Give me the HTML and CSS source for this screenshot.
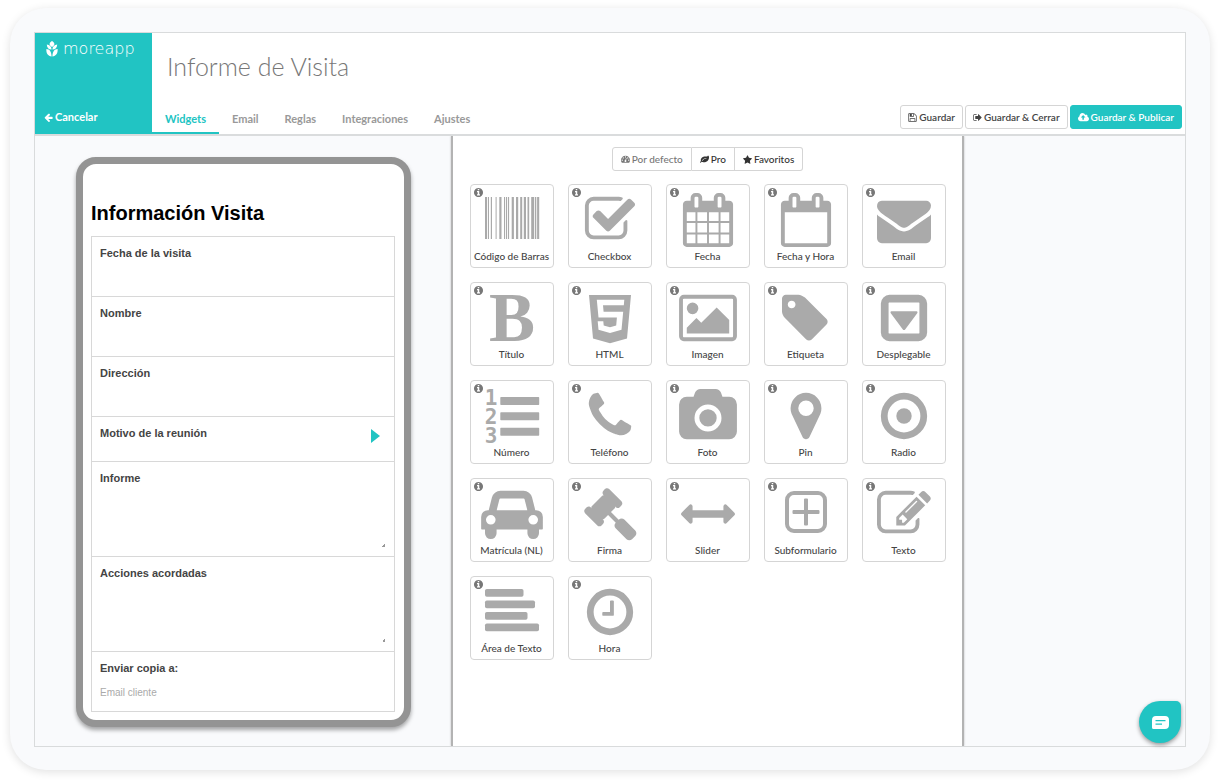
FILE: index.html
```html
<!DOCTYPE html>
<html lang="es">
<head>
<meta charset="utf-8">
<title>Informe de Visita</title>
<link rel="stylesheet" href="styles.css">
</head>
<body>
<svg class="sprite" aria-hidden="true">
  <symbol id="info" viewBox="128 128 1536 1536"><path d="M1152 1376v-160q0-14-9-23t-23-9h-96v-512q0-14-9-23t-23-9h-320q-14 0-23 9t-9 23v160q0 14 9 23t23 9h96v320h-96q-14 0-23 9t-9 23v160q0 14 9 23t23 9h448q14 0 23-9t9-23zm-128-896v-160q0-14-9-23t-23-9h-192q-14 0-23 9t-9 23v160q0 14 9 23t23 9h192q14 0 23-9t9-23zm640 416q0 209-103 385.5t-279.5 279.5-385.5 103-385.5-103-279.5-279.5-103-385.5 103-385.5 279.5-279.5 385.5-103 385.5 103 279.5 279.5 103 385.5z"/></symbol>
</svg>
<main class="frame">
  <div class="app">
    <header class="header">
      <div class="brand">
        <div class="logo">
          <svg class="logo-mark" viewBox="0 0 12 16" aria-hidden="true"><path d="M6 0c1.600.9 2.400 1.900 2.400 3S7.600 5 6 5.900C4.400 5 3.600 4.100 3.600 3S4.400.9 6 0zM.8 3.500C3.700 4 5.400 5.600 5.600 8.600 2.600 8.400.8 6.600.8 3.500zM11.200 3.500C8.300 4 6.600 5.600 6.400 8.600c3-.2 4.800-2 4.800-5.100zM.4 8c3.300.3 5 2.200 5.200 7.600C2 15 0 12.500.4 8zM11.600 8c-3.300.3-5 2.200-5.200 7.600C10 15 12 12.500 11.600 8z"/></svg>
          <span class="logo-text">moreapp</span>
        </div>
        <a class="cancel" href="#"><svg class="ico" viewBox="64 128 1664 1536" aria-hidden="true"><path d="M1664 896v128q0 53-32.500 90.500t-84.500 37.500h-704l293 294q38 36 38 90t-38 90l-75 76q-37 37-90 37-52 0-91-37l-651-652q-37-37-37-90 0-52 37-91l651-650q38-38 91-38 52 0 90 38l75 74q38 38 38 91t-38 91l-293 293h704q52 0 84.500 37.500t32.500 90.500z"/></svg>Cancelar</a>
      </div>
      <div class="head-main">
        <h1 class="title">Informe de Visita</h1>
        <div class="bar">
          <nav class="tabs">
            <a class="tab active" href="#">Widgets</a>
            <a class="tab" href="#">Email</a>
            <a class="tab" href="#">Reglas</a>
            <a class="tab" href="#">Integraciones</a>
            <a class="tab" href="#">Ajustes</a>
          </nav>
          <div class="actions">
            <button class="btn" type="button"><svg class="ico" viewBox="64 64 1664 1664" aria-hidden="true"><path d="M512 1536h768v-384h-768v384zm896 0h128v-896q0-14-10-38.500t-20-34.500l-281-281q-10-10-34-20t-39-10v416q0 40-28 68t-68 28h-576q-40 0-68-28t-28-68v-416h-128v1280h128v-416q0-40 28-68t68-28h832q40 0 68 28t28 68v416zm-384-928v-320q0-13-9.500-22.500t-22.500-9.500h-192q-13 0-22.500 9.500t-9.500 22.500v320q0 13 9.500 22.500t22.500 9.500h192q13 0 22.500-9.500t9.500-22.500zm640 32v928q0 40-28 68t-68 28h-1344q-40 0-68-28t-28-68v-1344q0-40 28-68t68-28h928q40 0 88 20t76 48l280 280q28 28 48 76t20 88z"/></svg>Guardar</button>
            <button class="btn" type="button"><svg class="ico" viewBox="32 64 1664 1664" aria-hidden="true"><path d="M704 1440q0 4 1 20t.5 26.500-3 23.500-10 19.500-20.500 6.500h-320q-119 0-203.500-84.500t-84.500-203.500v-704q0-119 84.500-203.500t203.500-84.500h320q13 0 22.500 9.500t9.500 22.500q0 4 1 20t.5 26.500-3 23.500-10 19.500-20.500 6.500h-320q-66 0-113 47t-47 113v704q0 66 47 113t113 47h312l11.500 1 11.500 3 8 5.500 7 9 2 13.500zm928-544q0 26-19 45l-544 544q-19 19-45 19t-45-19-19-45v-288h-448q-26 0-45-19t-19-45v-384q0-26 19-45t45-19h448v-288q0-26 19-45t45-19 45 19l544 544q19 19 19 45z"/></svg>Guardar &amp; Cerrar</button>
            <button class="btn primary" type="button"><svg class="ico wide" viewBox="-64 128 1920 1536" aria-hidden="true"><path d="M1216 864q0-14-9-23l-352-352q-9-9-23-9t-23 9l-351 351q-10 12-10 24 0 14 9 23t23 9h224v352q0 13 9.500 22.500t22.500 9.500h192q13 0 22.500-9.500t9.500-22.500v-352h224q13 0 22.500-9.500t9.500-22.500zm640 288q0 159-112.500 271.500t-271.500 112.500h-1088q-185 0-316.500-131.500t-131.500-316.500q0-130 70-240t188-165q-2-30-2-43 0-212 150-362t362-150q156 0 285.500 87t188.500 231q71-62 166-62 106 0 181 75t75 181q0 76-41 138 130 31 213.500 135.500t83.500 238.500z"/></svg>Guardar &amp; Publicar</button>
          </div>
        </div>
      </div>
    </header>
    <div class="work">
      <section class="preview">
        <form class="phone">
          <h2 class="form-title">Información Visita</h2>
          <div class="fields">
            <div class="field"><label for="f1">Fecha de la visita</label><input id="f1" type="text"></div>
            <div class="field"><label for="f2">Nombre</label><input id="f2" type="text"></div>
            <div class="field"><label for="f3">Dirección</label><input id="f3" type="text"></div>
            <div class="field link"><span>Motivo de la reunión</span><button class="next" type="button" aria-label="Abrir"><svg viewBox="0 0 9 14"><path d="M0 0 9 7 0 14z"/></svg></button></div>
            <div class="field"><label for="f5">Informe</label><textarea id="f5"></textarea></div>
            <div class="field"><label for="f6">Acciones acordadas</label><textarea id="f6"></textarea></div>
            <div class="field"><label for="f7">Enviar copia a:</label><input id="f7" type="email" placeholder="Email cliente"></div>
          </div>
        </form>
      </section>
      <section class="palette">
        <div class="filters">
          <button class="filter muted" type="button"><svg class="ico" viewBox="0 128 1792 1536" aria-hidden="true"><path fill-rule="evenodd" d="M896 128a896 896 0 0 1 896 896q0 261-141 483-19 29-54 29H195q-35 0-54-29Q0 1285 0 1024A896 896 0 0 1 896 128zM384 1024a128 128 0 1 0-256 0 128 128 0 1 0 256 0zM576 576a128 128 0 1 0-256 0 128 128 0 1 0 256 0zM1024 384a128 128 0 1 0-256 0 128 128 0 1 0 256 0zM1472 576a128 128 0 1 0-256 0 128 128 0 1 0 256 0zM1664 1024a128 128 0 1 0-256 0 128 128 0 1 0 256 0zM1004 1041l101-382q6-26-7.500-48.500T1059 581t-48 6.500T981 626L880 1008a192 192 0 1 0 124 33z"/></svg>Por defecto</button>
          <button class="filter" type="button"><svg class="ico" viewBox="0 128 1792 1536" aria-hidden="true"><path d="M1280 704q0-26-19-45t-45-19q-172 0-318 49.500t-259.500 134-235.500 219.500q-19 21-19 45 0 26 19 45t45 19q24 0 45-19 27-24 74-71t67-66q137-124 268.500-176t313.500-52q26 0 45-19t19-45zm512-198q0 95-20 193-46 224-184.500 383t-357.500 268q-214 108-438 108-148 0-286-47-15-5-88-42t-96-37q-16 0-39.500 32t-45 70-52.500 70-60 32q-43 0-63.500-17.500t-45.500-59.500q-2-4-6-11t-5.500-10-3-9.500-1.500-13.500q0-35 31-73.500t68-65.500 68-56 31-48q0-4-14-38t-16-44q-9-51-9-104 0-115 43.500-220t119-184.500 170.500-139 204-95.500q55-18 145-25.500t179.500-9 178.500-6 163.500-24 113.500-56.500l29.500-29.500 29.500-28 27-20 36.500-16 43.500-4.500q39 0 70.500 46t47.500 112 24 124 8 96z"/></svg>Pro</button>
          <button class="filter" type="button"><svg class="ico" viewBox="64 32 1664 1600" aria-hidden="true"><path d="M1728 647q0 22-26 48l-363 354 86 500q1 7 1 20 0 21-10.500 35.500t-30.500 14.500q-19 0-40-12l-449-236-449 236q-22 12-40 12-21 0-31.500-14.500t-10.500-35.500q0-6 2-20l86-500-364-354q-25-27-25-48 0-37 56-46l502-73 225-455q19-41 49-41t49 41l225 455 502 73q56 9 56 46z"/></svg>Favoritos</button>
        </div>
        <div class="grid">
          <div class="tile"><svg class="info"><use href="#info"/></svg><svg class="pic" viewBox="0 0 62 54"><path d="M4 4h2v42H4zM6.900 4H8v42H6.900zM9.800 4H11v42H9.800zM14.600 4h1v42h-1zM18.300 4h2.200v42h-2.200zM23 4h1.100v42H23zM25 4h1.100v42H25zM27 4h1.100v42H27zM30.700 4h2.200v42h-2.200zM35 4h2.200v42H35zM39.200 4h2v42h-2zM42.800 4h2.200v42h-2.200zM46.500 4h1.700v42h-1.700zM50.200 4h3v42h-3zM54 4h1.300v42H54zM56.100 4h2.100v42h-2.100z"/></svg><span>Código de Barras</span></div>
          <div class="tile"><svg class="info"><use href="#info"/></svg><svg class="pic" viewBox="-133 0 2058 1792"><path d="M1472 930v318q0 119-84.500 203.500t-203.500 84.500h-832q-119 0-203.500-84.500t-84.500-203.500v-832q0-119 84.500-203.500t203.500-84.500h832q63 0 117 25 15 7 18 23 3 17-9 29l-49 49q-10 10-23 10-3 0-9-2-23-6-45-6h-832q-66 0-113 47t-47 113v832q0 66 47 113t113 47h832q66 0 113-47t47-113v-254q0-13 9-22l64-64q10-10 23-10 6 0 12 3 20 8 20 29zm231-489l-814 814q-24 24-57 24t-57-24l-430-430q-24-24-24-57t24-57l110-110q24-24 57-24t57 24l263 263 647-647q24-24 57-24t57 24l110 110q24 24 24 57t-24 57z"/></svg><span>Checkbox</span></div>
          <div class="tile"><svg class="info"><use href="#info"/></svg><svg class="pic" viewBox="-133 0 2058 1792"><path d="M192 1664h288v-288h-288v288zm352 0h320v-288h-320v288zm-352-352h288v-320h-288v320zm352 0h320v-320h-320v320zm-352-384h288v-288h-288v288zm736 736h320v-288h-320v288zm-384-736h320v-288h-320v288zm768 736h288v-288h-288v288zm-384-352h320v-320h-320v320zm-352-864v-288q0-14-9-23t-23-9h-64q-14 0-23 9t-9 23v288q0 14 9 23t23 9h64q14 0 23-9t9-23zm736 864h288v-320h-288v320zm-384-384h320v-288h-320v288zm384 0h288v-288h-288v288zm32-480v-288q0-14-9-23t-23-9h-64q-14 0-23 9t-9 23v288q0 14 9 23t23 9h64q14 0 23-9t9-23zm384-64v1280q0 52-38 90t-90 38h-1408q-52 0-90-38t-38-90v-1280q0-52 38-90t90-38h128v-96q0-66 47-113t113-47h64q66 0 113 47t47 113v96h384v-96q0-66 47-113t113-47h64q66 0 113 47t47 113v96h128q52 0 90 38t38 90z"/></svg><span>Fecha</span></div>
          <div class="tile"><svg class="info"><use href="#info"/></svg><svg class="pic" viewBox="-133 0 2058 1792"><path d="M192 1664h1408v-1024h-1408v1024zm384-1216v-288q0-14-9-23t-23-9h-64q-14 0-23 9t-9 23v288q0 14 9 23t23 9h64q14 0 23-9t9-23zm768 0v-288q0-14-9-23t-23-9h-64q-14 0-23 9t-9 23v288q0 14 9 23t23 9h64q14 0 23-9t9-23zm384-64v1280q0 52-38 90t-90 38h-1408q-52 0-90-38t-38-90v-1280q0-52 38-90t90-38h128v-96q0-66 47-113t113-47h64q66 0 113 47t47 113v96h384v-96q0-66 47-113t113-47h64q66 0 113 47t47 113v96h128q52 0 90 38t38 90z"/></svg><span>Fecha y Hora</span></div>
          <div class="tile"><svg class="info"><use href="#info"/></svg><svg class="pic" viewBox="-133 0 2058 1792"><path d="M1792 710v794q0 66-47 113t-113 47h-1472q-66 0-113-47t-47-113v-794q44 49 101 87 362 246 497 345 57 42 92.500 65.500t94.500 48 110 24.500h2q51 0 110-24.500t94.500-48 92.500-65.500q170-123 498-345 57-39 100-87zm0-294q0 79-49 151t-122 123q-376 261-468 325-10 7-42.500 31t-54 38.500-52 32.500-57.500 27-50 9h-2q-23 0-50-9t-57.500-27-52-32.500-54-38.500-42.500-31q-91-64-262-182.500t-205-142.500q-62-42-117-115.500t-55-136.500q0-78 41.500-130t118.500-52h1472q65 0 112.500 47t47.500 113z"/></svg><span>Email</span></div>

          <div class="tile"><svg class="info"><use href="#info"/></svg><svg class="pic" viewBox="0 0 62 54"><text class="bold-b" x="31" y="50" text-anchor="middle">B</text></svg><span>Título</span></div>
          <div class="tile"><svg class="info"><use href="#info"/></svg><svg class="pic" viewBox="0 0 62 54"><path fill-rule="evenodd" d="M10 4h42l-4 43.500L31 52.200 14 47.500zM17.800 8.800h27.500l-.5 5.500H24l.6 6.500h19.600l-1.700 18L31 42l-11.500-3.200-.8-8.600h5.600l.4 4.300 6.300 1.700 6.200-1.700.7-7.900H19.500z"/></svg><span>HTML</span></div>
          <div class="tile"><svg class="info"><use href="#info"/></svg><svg class="pic" viewBox="-133 0 2058 1792"><path d="M576 576q0 80-56 136t-136 56-136-56-56-136 56-136 136-56 136 56 56 136zm1024 384v448h-1408v-192l320-320 160 160 512-512zm96-704h-1600q-13 0-22.500 9.500t-9.500 22.500v1216q0 13 9.500 22.500t22.500 9.500h1600q13 0 22.500-9.500t9.500-22.500v-1216q0-13-9.500-22.500t-22.500-9.500zm160 32v1216q0 66-47 113t-113 47h-1600q-66 0-113-47t-47-113v-1216q0-66 47-113t113-47h1600q66 0 113 47t47 113z"/></svg><span>Imagen</span></div>
          <div class="tile"><svg class="info"><use href="#info"/></svg><svg class="pic" viewBox="-104 0 2058 1792"><path d="M576 448q0-53-37.500-90.500t-90.500-37.500-90.500 37.500-37.500 90.500 37.500 90.500 90.500 37.500 90.500-37.500 37.500-90.500zm1067 576q0 53-37 90l-491 492q-39 37-91 37-53 0-90-37l-715-716q-38-37-64.500-101t-26.500-117v-416q0-52 38-90t90-38h416q53 0 117 26.500t102 64.500l715 714q37 39 37 91z"/></svg><span>Etiqueta</span></div>
          <div class="tile"><svg class="info"><use href="#info"/></svg><svg class="pic" viewBox="-133 0 2058 1792"><path d="M1344 704q0 16-10 32l-400 540q-16 20-38 20t-38-20L458 736q-10-16-10-32 0-32 32-32h832q32 0 32 32zM400 1408h992q16 0 16-16V400q0-16-16-16H400q-16 0-16 16v992q0 16 16 16zM1664 416v960q0 119-84.500 203.500T1376 1664H416q-119 0-203.500-84.500T128 1376V416q0-119 84.500-203.500T416 128h960q119 0 203.500 84.500T1664 416z" fill-rule="evenodd"/></svg><span>Desplegable</span></div>

          <div class="tile"><svg class="info"><use href="#info"/></svg><svg class="pic" viewBox="0 0 62 54"><g class="digits"><text x="10" y="16" text-anchor="middle">1</text><text x="10" y="35" text-anchor="middle">2</text><text x="10" y="54" text-anchor="middle">3</text></g><path d="M20 8h37.500q.7 0 .7.700v6.600q0 .7-.7.700H20q-.7 0-.7-.7V8.700Q19.300 8 20 8zM20 23.300h37.500q.7 0 .7.700v6.600q0 .7-.7.700H20q-.7 0-.7-.7V24q0-.7.7-.7zM20 38.700h37.500q.7 0 .7.700V46q0 .7-.7.700H20q-.7 0-.7-.7v-6.600q0-.7.7-.7z"/></svg><span>Número</span></div>
          <div class="tile"><svg class="info"><use href="#info"/></svg><svg class="pic" viewBox="-133 0 2058 1792"><path d="M1600 1240q0 27-10 70.500t-21 68.500q-21 50-122 106-94 51-186 51-27 0-52.500-3.500t-57.500-12.500-47.500-14.500-55.500-20.500-49-18q-98-35-175-83-128-79-264.500-215.500t-215.500-264.500q-48-77-83-175-3-9-18-49t-20.500-55.500-14.500-47.500-12.500-57.500-3.500-52.500q0-92 51-186 56-101 106-122 25-11 68.500-21t70.500-10q14 0 21 3 18 6 53 76 11 19 30 54t35 63.500 31 53.500q3 4 17.500 25t21.500 35.500 7 28.500q0 20-28.500 50t-62 55-62 53-28.500 46q0 9 5 22.500t8.500 20.500 14 24 11.500 19q76 137 174 235t235 174q2 1 19 11.500t24 14 20.500 8.500 22.500 5q18 0 46-28.500t53-62 55-62 50-28.500q14 0 28.500 7t35.500 21.500 25 17.500q25 15 53.500 31t63.500 35 54 30q70 35 76 53 3 7 3 21z"/></svg><span>Teléfono</span></div>
          <div class="tile"><svg class="info"><use href="#info"/></svg><svg class="pic" viewBox="-133 0 2058 1792"><path d="M896 672q119 0 203.500 84.500t84.500 203.500-84.500 203.500-203.500 84.500-203.500-84.500-84.500-203.500 84.500-203.500 203.500-84.500zm704-416q106 0 181 75t75 181v896q0 106-75 181t-181 75h-1408q-106 0-181-75t-75-181v-896q0-106 75-181t181-75h224l51-136q19-49 69.500-84.500t103.500-35.500h512q53 0 103.500 35.500t69.500 84.500l51 136h224zm-704 1152q185 0 316.500-131.500t131.500-316.500-131.500-316.500-316.500-131.500-316.500 131.500-131.500 316.500 131.500 316.500 316.500 131.500z"/></svg><span>Foto</span></div>
          <div class="tile"><svg class="info"><use href="#info"/></svg><svg class="pic" viewBox="-133 0 2058 1792"><path d="M1152 640q0-106-75-181t-181-75-181 75-75 181 75 181 181 75 181-75 75-181zm256 0q0 109-33 179l-364 774q-16 33-47.500 52t-67.500 19-67.500-19-46.500-52l-365-774q-33-70-33-179 0-212 150-362t362-150 362 150 150 362z"/></svg><span>Pin</span></div>
          <div class="tile"><svg class="info"><use href="#info"/></svg><svg class="pic" viewBox="-133 0 2058 1792"><circle class="ring" cx="896" cy="896" r="656"/><circle cx="896" cy="896" r="256"/></svg><span>Radio</span></div>

          <div class="tile"><svg class="info"><use href="#info"/></svg><svg class="pic" viewBox="-5 0 2058 1792"><path d="M480 1088q0-66-47-113t-113-47-113 47-47 113 47 113 113 47 113-47 47-113zm36-320h1016l-89-357q-2-8-14-17.500t-21-9.500h-768q-9 0-21 9.500t-14 17.500zm1372 320q0-66-47-113t-113-47-113 47-47 113 47 113 113 47 113-47 47-113zm160-96v384q0 14-9 23t-23 9h-96v128q0 80-56 136t-136 56-136-56-56-136v-128h-1024v128q0 80-56 136t-136 56-136-56-56-136v-128h-96q-14 0-23-9t-9-23v-384q0-93 65.500-158.500t158.500-65.500h28l105-419q23-94 104-157.500t179-63.500h768q98 0 179 63.500t104 157.500l105 419h28q93 0 158.500 65.500t65.500 158.500z"/></svg><span>Matrícula (NL)</span></div>
          <div class="tile"><svg class="info"><use href="#info"/></svg><svg class="pic" viewBox="-133 0 2058 1792"><path d="M1771 1536q0 53-37 90l-107 108q-39 37-91 37-53 0-90-37l-363-364q-38-36-38-90 0-53 43-96l-256-256-126 126q-14 14-34 14t-34-14q2 2 12.500 12t12.500 13 10 11.500 10 13.500 6 13.500 5.500 16.500 1.500 18q0 38-28 68-3 3-16.500 18t-19 20.500-18.500 16.500-22 15.500-22 9-26 4.500q-40 0-68-28l-408-408q-28-28-28-68 0-13 4.500-26t9-22 15.500-22 16.500-18.500 20.500-19 18-16.500q30-28 68-28 10 0 18 1.500t16.500 5.500 13.500 6 13.500 10 11.500 10 13 12.500 12 12.500q-14-14-14-34t14-34l348-348q14-14 34-14t34 14q-2-2-12.500-12t-12.500-13-10-11.500-10-13.500-6-13.500-5.500-16.500-1.500-18q0-38 28-68 3-3 16.500-18t19-20.500 18.500-16.500 22-15.500 22-9 26-4.500q40 0 68 28l408 408q28 28 28 68 0 13-4.500 26t-9 22-15.500 22-16.500 18.500-20.500 19-18 16.500q-30 28-68 28-10 0-18-1.500t-16.500-5.500-13.500-6-13.500-10-11.500-10-13-12.500-12-12.500q14 14 14 34t-14 34l-126 126 256 256q43-43 96-43 52 0 91 37l363 363q37 39 37 91z"/></svg><span>Firma</span></div>
          <div class="tile"><svg class="info"><use href="#info"/></svg><svg class="pic" viewBox="-133 0 2058 1792"><path d="M1792 896q0 26-19 45l-256 256q-19 19-45 19t-45-19-19-45v-128h-1024v128q0 26-19 45t-45 19-45-19l-256-256q-19-19-19-45t19-45l256-256q19-19 45-19t45 19 19 45v128h1024v-128q0-26 19-45t45-19 45 19l256 256q19 19 19 45z"/></svg><span>Slider</span></div>
          <div class="tile"><svg class="info"><use href="#info"/></svg><svg class="pic" viewBox="0 0 62 54"><rect class="box" x="12" y="6" width="38" height="38" rx="7"/><path d="M29 12.500q0-1 1-1h2q1 0 1 1V23h10.500q1 0 1 1v2q0 1-1 1H33v10.500q0 1-1 1h-2q-1 0-1-1V27H18.500q-1 0-1-1v-2q0-1 1-1H29z"/></svg><span>Subformulario</span></div>
          <div class="tile"><svg class="info"><use href="#info"/></svg><svg class="pic" viewBox="-133 0 2058 1792"><path d="M888 1184l116-116-152-152-116 116v56h96v96h56zm440-720q-16-16-33 1l-350 350q-17 17-1 33t33-1l350-350q17-17 1-33zm80 594v190q0 119-84.500 203.500t-203.500 84.500h-832q-119 0-203.500-84.500t-84.500-203.500v-832q0-119 84.500-203.500t203.500-84.500h832q63 0 117 25 15 7 18 23 3 17-9 29l-49 49q-14 14-32 8-23-6-45-6h-832q-66 0-113 47t-47 113v832q0 66 47 113t113 47h832q66 0 113-47t47-113v-126q0-13 9-22l64-64q15-15 35-7t20 29zm-96-738l288 288-672 672h-288v-288zm444 132l-92 92-288-288 92-92q28-28 68-28t68 28l152 152q28 28 28 68t-28 68z"/></svg><span>Texto</span></div>

          <div class="tile"><svg class="info"><use href="#info"/></svg><svg class="pic" viewBox="0 0 62 54"><rect x="4" y="4" width="38.500" height="7.700" rx="1.800"/><rect x="4" y="15.500" width="50" height="7.700" rx="1.800"/><rect x="4" y="27" width="42.500" height="7.700" rx="1.800"/><rect x="4" y="38.500" width="54" height="7.700" rx="1.800"/></svg><span>Área de Texto</span></div>
          <div class="tile"><svg class="info"><use href="#info"/></svg><svg class="pic" viewBox="-133 0 2058 1792"><circle class="ring" cx="896" cy="896" r="656"/><path d="M1024 544v448q0 14-9 23t-23 9H672q-14 0-23-9t-9-23v-64q0-14 9-23t23-9h224V544q0-14 9-23t23-9h64q14 0 23 9t9 23z"/></svg><span>Hora</span></div>
        </div>
      </section>
      <aside class="side">
        <button class="chat" type="button" aria-label="Chat"><svg viewBox="0 0 17 13"><path fill-rule="evenodd" d="M4 0h9q4 0 4 4v5q0 4-4 4H1.500Q0 13 0 11.500V4q0-4 4-4zM3.500 4v1.300h10V4zM3.500 7.500v1.300H10V7.500z"/></svg></button>
      </aside>
    </div>
  </div>
</main>
</body>
</html>
```
FILE: styles.css
```css
* { box-sizing: border-box; }

body {
  margin: 0;
  min-height: 100vh;
  padding: 8px 10px 13px;
  display: flex;
  background: #fff;
  font-family: Lato, "Liberation Sans", sans-serif;
  color: #444;
}

svg { display: block; fill: currentColor; overflow: visible; }
.sprite { position: absolute; width: 0; height: 0; }
button { font: inherit; color: inherit; cursor: pointer; }
a { text-decoration: none; }

.frame {
  flex: 1;
  display: flex;
  padding: 24px 24px 23px;
  border-radius: 36px;
  background: #f9fafc;
  box-shadow: 0 2px 10px rgba(0, 0, 0, 0.12);
}

.app {
  flex: 1;
  display: flex;
  flex-direction: column;
  border: 1px solid #d9dbdc;
}

.header {
  display: flex;
  min-height: 103px;
  background: #fff;
  border-bottom: 2px solid #dadcdd;
}

.brand {
  width: 117px;
  display: flex;
  flex-direction: column;
  justify-content: space-between;
  padding: 8px 9px;
  background: #21c4c3;
  color: #fff;
}

.logo { display: flex; align-items: center; gap: 5px; padding-left: 2px; }
.logo-mark { width: 12px; height: 16px; }
.logo-text {
  font: 200 16px/16px "DejaVu Sans Light", "DejaVu Sans", sans-serif;
}

.cancel {
  display: flex;
  align-items: center;
  gap: 2px;
  color: #fff;
  font-size: 11px;
  font-weight: 700;
  line-height: 18px;
}

.ico { width: 9px; height: 9px; flex: none; }
.ico.wide { width: 11px; }

.head-main {
  flex: 1;
  display: flex;
  flex-direction: column;
  justify-content: space-between;
}

.title {
  margin: 0;
  padding: 17px 15px 0;
  font-size: 25px;
  font-weight: 300;
  line-height: 32px;
  color: #777;
}

.bar {
  display: flex;
  justify-content: space-between;
  align-items: flex-end;
}

.tabs { display: flex; }

.tab {
  padding: 7px 13px 5px;
  border-bottom: 2px solid transparent;
  font-size: 11px;
  font-weight: 700;
  line-height: 16px;
  color: #999;
}

.tab.active { color: #21c4c3; border-color: #21c4c3; }

.actions { display: flex; gap: 2px; padding: 0 3px 5px 0; }

.btn {
  display: flex;
  align-items: center;
  gap: 2px;
  height: 24px;
  padding: 0 7px;
  border: 1px solid #d5d5d5;
  border-radius: 3px;
  background: #fff;
  font-size: 10px;
  font-weight: 600;
  color: #444;
}

.btn.primary { background: #21c4c3; border-color: #21c4c3; color: #fff; }

.work {
  flex: 1;
  display: grid;
  grid-template-columns: minmax(0, 416fr) minmax(0, 513fr) minmax(0, 221fr);
}

.preview {
  display: flex;
  align-items: flex-start;
  justify-content: center;
  padding: 21px 40px 16px 41px;
}

.phone {
  flex: 1;
  padding: 34px 9px 8px 8px;
  border: 7px solid #949494;
  border-radius: 20px;
  background: #fff;
  box-shadow: 0 3px 4px rgba(0, 0, 0, 0.35);
  font-family: "Liberation Sans", Arial, sans-serif;
}

.form-title {
  margin: 0 0 8px;
  font-size: 20px;
  font-weight: 700;
  line-height: 30px;
  color: #000;
}

.fields { border: 1px solid #d8d8d8; }

.field {
  display: flex;
  flex-direction: column;
  padding: 8px;
  font-size: 11px;
  font-weight: 700;
  line-height: 16px;
  color: #444;
}

.field + .field { border-top: 1px solid #d8d8d8; }

.field input {
  height: 28px;
  margin-bottom: -1px;
  padding: 5px 0 0;
  border: 0;
  outline: 0;
  background: transparent;
  font: 10px "Liberation Sans", Arial, sans-serif;
}

.field input::placeholder { color: #aaa; }

.field textarea {
  height: 62px;
  padding: 0;
  border: 0;
  outline: 0;
  background: transparent;
  resize: vertical;
}

.field textarea::-webkit-resizer {
  background: linear-gradient(135deg, transparent 50%, #999 50%) no-repeat right 1px bottom 1px / 3px 3px;
}

.field.link {
  flex-direction: row;
  justify-content: space-between;
  padding: 8px 14px 18px 8px;
}

.next { padding: 4px 0 0; border: 0; background: none; color: #21c4c3; }
.next svg { width: 9px; height: 14px; }

.palette {
  padding: 11px 16px;
  border: solid #b3b3b3;
  border-width: 0 2px;
  background: #fff;
  box-shadow: 0 0 2px rgba(0, 0, 0, 0.25);
  clip-path: inset(0 -3px);
}

.filters { display: flex; justify-content: center; margin-bottom: 13px; }

.filter {
  display: flex;
  align-items: center;
  gap: 2px;
  height: 24px;
  padding: 0 8px;
  border: 1px solid #d5d5d5;
  background: #fff;
  font-size: 10px;
  font-weight: 500;
  color: #333;
}

.filter + .filter { border-left: 0; }
.filter:first-child { border-radius: 3px 0 0 3px; }
.filter:last-child { border-radius: 0 3px 3px 0; }
.filter.muted { color: #777; }

.grid {
  display: grid;
  grid-template-columns: repeat(auto-fill, 84px);
  justify-content: center;
  gap: 14px;
}

.tile {
  position: relative;
  display: flex;
  flex-direction: column;
  align-items: center;
  height: 84px;
  padding-top: 8px;
  border: 1px solid #d5d5d5;
  border-radius: 4px;
  background: #fff;
  font-size: 10px;
  font-weight: 500;
  line-height: 16px;
  white-space: nowrap;
  cursor: grab;
}

.info {
  position: absolute;
  top: 3px;
  left: 3px;
  width: 9px;
  height: 9px;
  color: #777;
}

.pic { width: 62px; height: 54px; margin-bottom: 1px; color: #aaa; }

.bold-b { font: 700 69px "Liberation Serif", serif; }
.digits { font: 700 21px "DejaVu Sans Mono", monospace; }
.ring { fill: none; stroke: currentColor; stroke-width: 224; }
.box { fill: none; stroke: currentColor; stroke-width: 4; }

.side {
  display: flex;
  align-items: flex-end;
  justify-content: flex-end;
  padding: 3px 4px;
}

.chat {
  display: flex;
  align-items: center;
  justify-content: center;
  width: 42px;
  height: 42px;
  border: 0;
  border-radius: 50% 5px 50% 50%;
  background: #21c4c3;
  color: #fff;
  box-shadow: 0 2px 4px rgba(0, 0, 0, 0.4);
}

.chat svg { width: 17px; height: 13px; }
```
